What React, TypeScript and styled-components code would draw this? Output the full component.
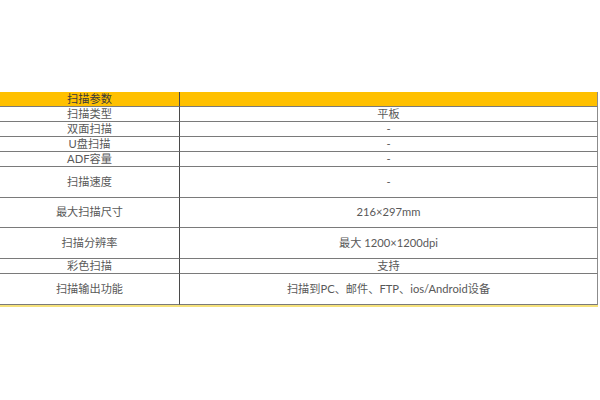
import React from 'react';
import styled, { createGlobalStyle } from 'styled-components';

const GlobalStyle = createGlobalStyle`
  html, body {
    margin: 0;
    padding: 0;
    background: #fff;
  }
  body {
    font-family: Lato, "Noto Sans CJK SC", sans-serif;
  }
`;

const rows: { label: string; value: string; h?: number }[] = [
  { label: '扫描类型', value: '平板' },
  { label: '双面扫描', value: '-' },
  { label: 'U盘扫描', value: '-' },
  { label: 'ADF容量', value: '-' },
  { label: '扫描速度', value: '-', h: 31 },
  { label: '最大扫描尺寸', value: '216×297mm', h: 30 },
  { label: '扫描分辨率', value: '最大 1200×1200dpi', h: 31 },
  { label: '彩色扫描', value: '支持' },
  { label: '扫描输出功能', value: '扫描到PC、邮件、FTP、ios/Android设备', h: 31 },
];

const Page = styled.div`
  padding-top: 92px;
  width: 600px;
  height: 400px;
  box-sizing: border-box;
`;

const Sheet = styled.div`
  width: 598px;
  display: grid;
  grid-template-columns: 180px 418px;
  border-bottom: 2px solid #f6e27c;
`;

const Cell = styled.div<{ $h: number; $head?: boolean; $last?: boolean }>`
  box-sizing: border-box;
  height: ${(p) => p.$h}px;
  display: flex;
  align-items: center;
  justify-content: center;
  font-size: 11.2px;
  line-height: 1;
  color: ${(p) => (p.$head ? '#3a3a3a' : '#595959')};
  background: ${(p) => (p.$head ? '#ffc000' : '#fff')};
  border-right: 1px solid ${(p) => (p.$last ? '#8c8c8c' : '#4a4a4a')};
  border-bottom: 1px solid #7a7a7a;
  padding-bottom: 1px;
`;

export default function App() {
  return (
    <Page>
      <GlobalStyle />
      <Sheet>
        <Cell $h={15} $head>
          扫描参数
        </Cell>
        <Cell $h={15} $head $last />
        {rows.map((r) => (
          <React.Fragment key={r.label}>
            <Cell $h={r.h ?? 15}>{r.label}</Cell>
            <Cell $h={r.h ?? 15} $last>
              {r.value}
            </Cell>
          </React.Fragment>
        ))}
      </Sheet>
    </Page>
  );
}
